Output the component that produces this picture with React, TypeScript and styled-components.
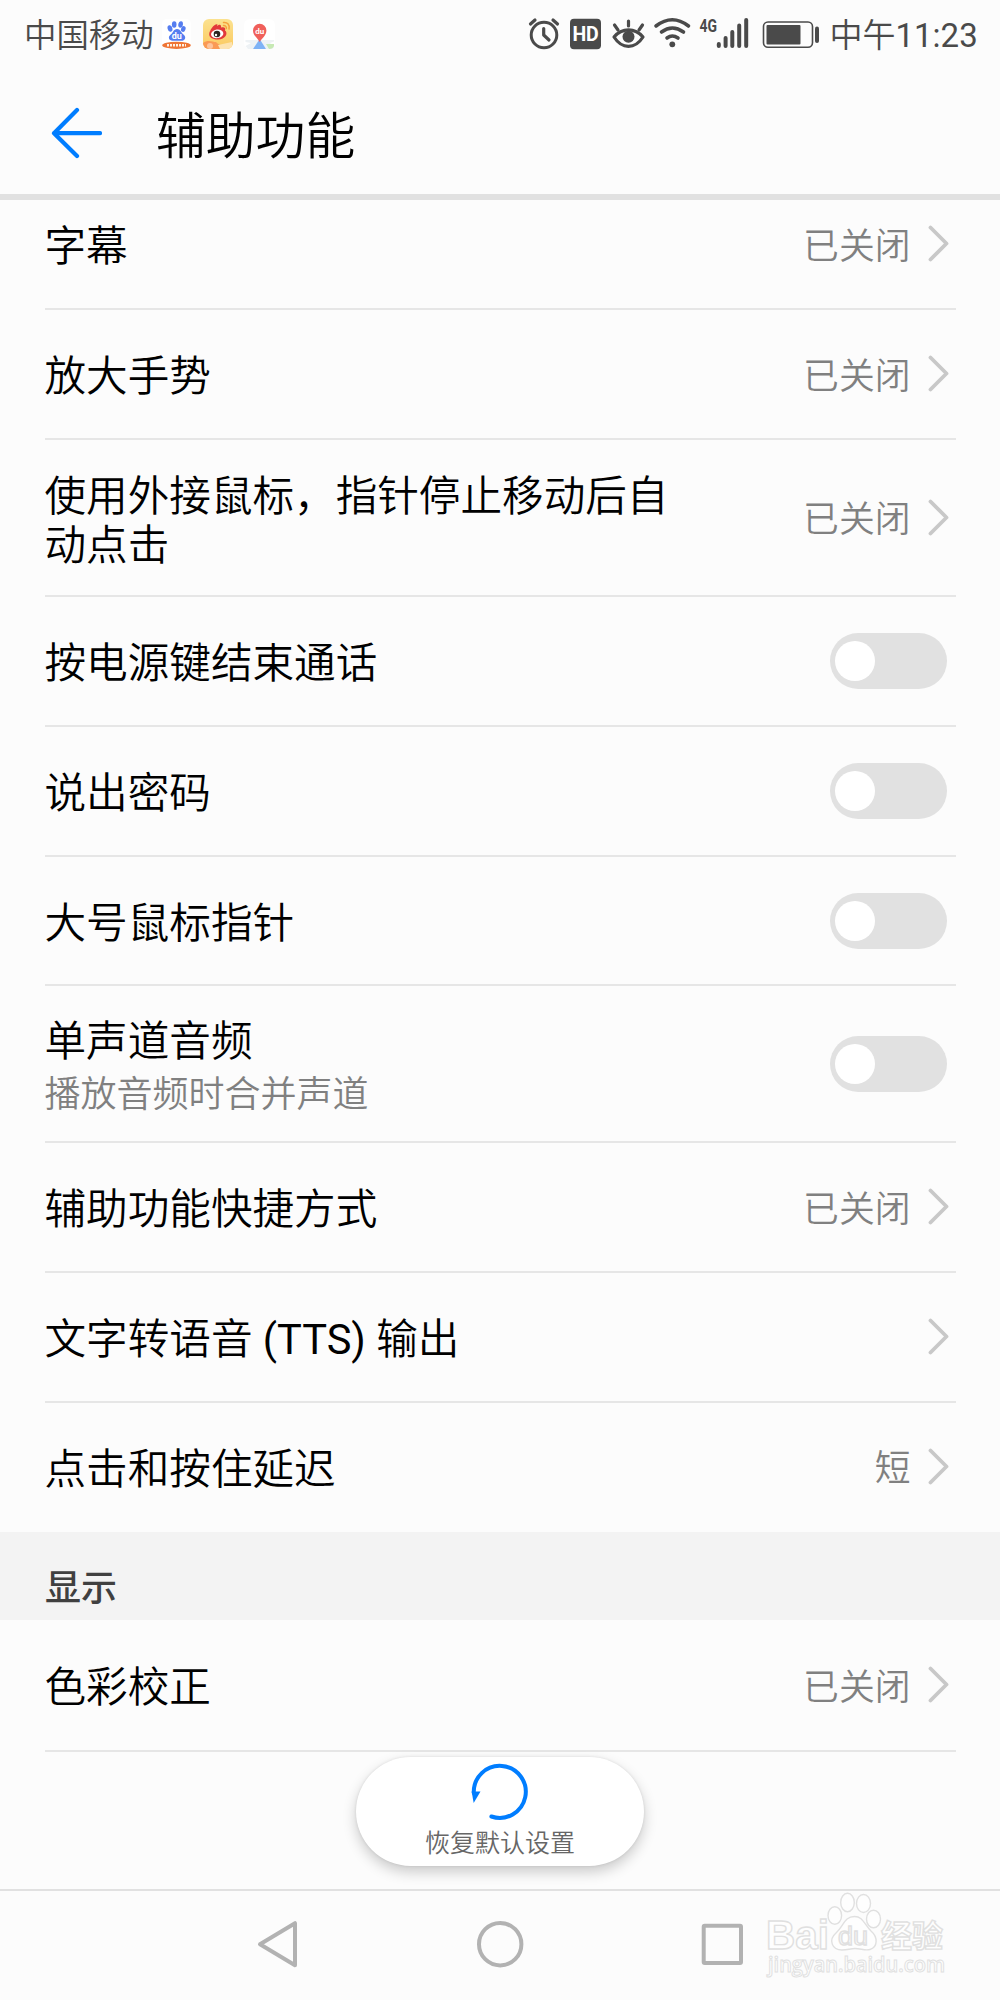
import React from "react";
import styled, { createGlobalStyle } from "styled-components";

const GlobalStyle = createGlobalStyle`
  body { margin: 0; background: #fcfcfc; }
  * { box-sizing: border-box; }
`;

const fontStack = `Roboto, "Noto Sans CJK SC DemiLight", "Noto Sans CJK SC", sans-serif`;

const Screen = styled.main`
  position: relative;
  display: flex;
  flex-direction: column;
  width: 1000px;
  height: 2000px;
  overflow: hidden;
  background: #fcfcfc;
  color: #000;
  font-family: ${fontStack};
`;

const StatusBar = styled.header`
  display: flex;
  justify-content: space-between;
  height: 70px;
  padding: 0 22px 0 24px;
  color: #4a4a4a;
  font-size: 32.4px;
  line-height: 72px;
`;

const StatusGroup = styled.div`
  display: flex;
  white-space: nowrap;
  svg { display: block; flex: none; }
`;

const Carrier = styled.span`
  width: 130px;
`;

const Clock = styled.span`
  width: 148.5px;
  margin-left: 5.5px;
  font-size: 33px;
`;

const TitleBar = styled.div`
  display: flex;
  align-items: center;
  height: 130px;
  padding-left: 50px;
  border-bottom: 6px solid #e1e1e1;
  svg { margin-top: 2px; }
`;

const Title = styled.h1`
  margin: 9px 0 0 54px;
  font-size: 49.800px;
  font-weight: 400;
  line-height: 60px;
`;

const List = styled.section`
  flex: 1;
  overflow: hidden;
`;

const Group = styled.div<{ $scrolled?: boolean }>`
  margin-top: ${(p) => (p.$scrolled ? "-20px" : "0")};
`;

const Row = styled.div<{ $height: number; $last?: boolean }>`
  display: flex;
  align-items: center;
  justify-content: space-between;
  height: ${(p) => p.$height}px;
  margin: 0 44.5px;
  border-bottom: 2px solid ${(p) => (p.$last ? "transparent" : "#e6e6e6")};
`;

const Texts = styled.div<{ $tall: boolean }>`
  width: 640px;
  padding-top: ${(p) => (p.$tall ? 7 : 5)}px;
`;

const Label = styled.div`
  font-size: 41.6px;
  line-height: 49px;
`;

const Summary = styled.div`
  margin-top: 6px;
  color: #808080;
  font-size: 36px;
  line-height: 46px;
`;

const Trailing = styled.div`
  display: flex;
  align-items: center;
  padding-right: 7px;
  svg { display: block; }
`;

const Value = styled.span`
  margin-right: 17px;
  padding-top: 5px;
  color: #808080;
  font-size: 35.800px;
  line-height: 44px;
`;

const Track = styled.div`
  width: 117px;
  height: 56px;
  margin-right: 1.5px;
  padding: 8px 5px;
  border-radius: 28px;
  background: #e1e1e1;
`;

const Knob = styled.div`
  width: 40px;
  height: 40px;
  border-radius: 50%;
  background: #fff;
`;

const SectionTitle = styled.h2`
  height: 88px;
  margin: 0;
  padding: 33px 45px 0;
  background: #f3f3f3;
  color: #404040;
  font-family: Roboto, "Noto Sans CJK SC", sans-serif;
  font-size: 36px;
  font-weight: 500;
  line-height: 48px;
`;

const RestoreButton = styled.button`
  position: absolute;
  left: 356px;
  top: 1757px;
  display: flex;
  flex-direction: column;
  align-items: center;
  width: 288px;
  height: 109px;
  padding: 6px 0 0;
  border: 0;
  border-radius: 55px;
  background: #fff;
  box-shadow: 0 6px 14px rgba(0, 0, 0, 0.2), 0 0 3px rgba(0, 0, 0, 0.1);
  color: #666;
  font: 400 25px/32px ${fontStack};
  svg { display: block; margin-bottom: 7px; }
`;

const NavBar = styled.nav`
  display: flex;
  justify-content: center;
  gap: 174px;
  height: 111px;
  padding-top: 29px;
  border-top: 2px solid #e1e1e1;
`;

const Watermark = styled.svg`
  position: absolute;
  left: 760px;
  top: 1885px;
`;

const BackArrow = () => (
  <svg width="52" height="52" viewBox="50 107 52 52" fill="none" stroke="#007dff" strokeWidth="4.2" strokeLinecap="round" strokeLinejoin="round">
    <path d="M77 110L54 133.200L77 156M54 133.200H100" />
  </svg>
);

const Chevron = () => (
  <svg width="21" height="38" viewBox="0 0 21 38" fill="none" stroke="#c8c8c8" strokeWidth="3.800" strokeLinecap="round" strokeLinejoin="round">
    <path d="M2.500 2.500L18.500 18.500L2.500 34.500" />
  </svg>
);

const AppIcons = () => (
  <svg width="124" height="70" viewBox="154 0 124 70">
    <rect x="162" y="19" width="29" height="30" rx="5" fill="#fff" />
    <g fill="#557df0">
      <ellipse cx="170" cy="28.500" rx="2.400" ry="3.300" transform="rotate(-15 170 28.500)" />
      <ellipse cx="174.200" cy="24.500" rx="2.300" ry="3.200" />
      <ellipse cx="180.600" cy="24.500" rx="2.300" ry="3.200" transform="rotate(10 180.600 24.500)" />
      <ellipse cx="183.300" cy="29" rx="2.200" ry="3" transform="rotate(20 183.300 29)" />
      <path d="M177 29C173.500 29 173 33 170.500 34.800C167.500 37 169 40.800 172.500 40.800H181C185.500 40.800 186.500 37 183.500 34.500C181 32.500 180.500 29 177 29Z" />
    </g>
    <text x="176.700" y="38.500" fontSize="9" fontWeight="700" textAnchor="middle" fill="#fff">du</text>
    <ellipse cx="176.500" cy="45.300" rx="14.300" ry="3.600" fill="#ef7535" />
    <path d="M167 45.300H186" stroke="#fff1e5" strokeWidth="2.500" strokeDasharray="2 1" />

    <defs>
      <linearGradient id="sunny" x2="0" y2="1">
        <stop offset="0" stopColor="#fbe290" />
        <stop offset="1" stopColor="#fbc95f" />
      </linearGradient>
      <clipPath id="tile"><rect x="203" y="19" width="30" height="30" rx="6" /></clipPath>
    </defs>
    <g clipPath="url(#tile)">
      <rect x="203" y="19" width="30" height="30" fill="url(#sunny)" />
      <path d="M203 43C208 39 213 42 216 42C219 46 224 44 226 49H203Z" fill="#fa9a55" />
      <circle cx="210" cy="46" r="3" fill="#fdc39a" />
      <path d="M218 45L232 42V49H220Z" fill="#fde3b0" />
    </g>
    <path d="M217 26C220 23.500 221.500 25 221 27.500C224 26.500 226 27.500 225 30.500C228.500 33 225.500 39.500 218 39.500C212 39.500 209 37 209.200 34C209.500 30 215 23 217.500 24.500Z" fill="#e2393b" />
    <ellipse cx="217.200" cy="33.800" rx="6.200" ry="4.300" fill="#fff" transform="rotate(-8 217.200 33.800)" />
    <circle cx="217" cy="34" r="3.300" fill="#2c2522" />
    <circle cx="216" cy="35" r="1.200" fill="#fff" />
    <path d="M223.500 22.500C227.500 22 230 25 229 29M223.500 25.500C225.500 25.300 226.700 27 226.300 28.500" fill="none" stroke="#f5a13d" strokeWidth="1.500" strokeLinecap="round" />

    <rect x="244" y="19" width="31" height="30" rx="6" fill="#fff" />
    <path d="M245.500 40H274V41.500L270 43L274 47L272 49H266L260 40L253 49H248L245.500 46L251 43L245.500 42Z" fill="#eef2f5" />
    <path d="M266 44L274 44V46Q273 49 269 49Z" fill="#c7e9b4" />
    <path d="M259.700 39L266 49H253Z" fill="#7eb2f5" />
    <path d="M259.700 42C257.500 38 253 35.500 253 30.500A6.700 6.700 0 0 1 266.400 30.500C266.400 35.500 262 38 259.700 42Z" fill="#f0605b" />
    <text x="259.700" y="34" fontSize="8" fontWeight="700" textAnchor="middle" fill="#fff">du</text>
  </svg>
);

const SystemIcons = () => (
  <svg width="300" height="70" viewBox="524 0 300 70" fill="none" stroke="#4a4a4a" strokeLinecap="round" strokeLinejoin="round">
    <circle cx="544" cy="35" r="12.800" strokeWidth="3" />
    <path d="M543.700 28.500V35L549 40" strokeWidth="3.200" />
    <path d="M530.500 24L535 20M557.500 24L553 20" strokeWidth="3.200" />
    <rect x="570" y="18.700" width="31" height="30.500" rx="4" fill="#4a4a4a" stroke="none" />
    <text x="585.600" y="40.700" fontSize="19.500" fontWeight="700" textAnchor="middle" textLength="26" fill="#fff" stroke="none">HD</text>
    <path d="M614 37C622 27.500 635 27.500 643 37C635 49.500 622 49.500 614 37Z" strokeWidth="3.200" />
    <circle cx="628.500" cy="36.800" r="6" fill="#4a4a4a" stroke="none" />
    <path d="M628.500 21V26M614.500 25L618 30M642.500 25L639 30" strokeWidth="3.200" />
    <path d="M656 26Q672.300 13.500 688.500 26M661.500 32Q672.300 24 683.500 32M667 38Q672.300 34 678 38" strokeWidth="3.600" />
    <circle cx="672.300" cy="44.300" r="2.900" fill="#4a4a4a" stroke="none" />
    <text x="699.500" y="31.500" fontSize="18.500" fontWeight="700" textLength="17.500" lengthAdjust="spacingAndGlyphs" fill="#4a4a4a" stroke="none">4G</text>
    <path d="M718.800 44V46M725.600 38V46M732.300 32V46M739.200 25.500V46M746.200 20V46" strokeWidth="4" />
    <rect x="763.500" y="22" width="49" height="25.300" rx="4.500" strokeWidth="1.600" />
    <rect x="766.500" y="25" width="34" height="19.500" rx="1" fill="#4a4a4a" stroke="none" />
    <path d="M817 28.500V41" strokeWidth="4" />
  </svg>
);

const RestoreIcon = () => (
  <svg width="58" height="58" viewBox="472 1763 58 58">
    <path d="M474.800 1793A26 26 0 1 1 492.400 1816.500" fill="none" stroke="#007dff" strokeWidth="4" strokeLinecap="round" />
    <path d="M472.600 1791.500H481.500L474.700 1803Z" fill="#007dff" />
  </svg>
);

const NavIcon = ({ children }: { children: React.ReactNode }) => (
  <svg width="48" height="48" viewBox="0 0 48 48" fill="none" stroke="#b2b2b2" strokeWidth="4" strokeLinejoin="round">
    {children}
  </svg>
);

const BaiduMark = () => (
  <Watermark width="235" height="115" viewBox="760 1885 235 115" fill="#fefefe" stroke="#e0e0e0" strokeWidth="1.400" fontFamily='"Open Sans", "Noto Sans CJK SC", sans-serif'>
    <ellipse cx="834.800" cy="1915.500" rx="6.800" ry="8.800" />
    <ellipse cx="847.500" cy="1902.500" rx="6.800" ry="9.200" />
    <ellipse cx="863.500" cy="1903.500" rx="7" ry="9" />
    <ellipse cx="873.500" cy="1919" rx="7" ry="8.800" />
    <path d="M854.500 1916.500C844 1916.500 844 1926 836 1933C828 1940 832 1950 842 1950C848 1950 850 1948.500 855 1948.500C861 1948.500 865 1951 870 1949.500C878 1947 878 1937 871 1931C864 1924 863 1916.500 854.500 1916.500Z" />
    <text x="766" y="1948.500" fontFamily='"Liberation Sans", sans-serif' fontSize="41" fontWeight="700" textLength="63" lengthAdjust="spacingAndGlyphs">Bai</text>
    <text x="838" y="1944.500" fontFamily='"Liberation Sans", sans-serif' fontSize="25" textLength="30" lengthAdjust="spacingAndGlyphs">du</text>
    <text x="881" y="1946.500" fontSize="31" fontWeight="700" textLength="62" lengthAdjust="spacingAndGlyphs">经验</text>
    <text x="768" y="1972" fontSize="21" fontWeight="600" strokeWidth="1" textLength="177" lengthAdjust="spacingAndGlyphs">jingyan.baidu.com</text>
  </Watermark>
);

type Item = { label: string; summary?: string; value?: string; toggle?: boolean; height?: number };

const general: Item[] = [
  { label: "字幕", value: "已关闭" },
  { label: "放大手势", value: "已关闭" },
  { label: "使用外接鼠标，指针停止移动后自动点击", value: "已关闭", height: 157 },
  { label: "按电源键结束通话", toggle: true },
  { label: "说出密码", toggle: true },
  { label: "大号鼠标指针", toggle: true, height: 129 },
  { label: "单声道音频", summary: "播放音频时合并声道", toggle: true, height: 157 },
  { label: "辅助功能快捷方式", value: "已关闭" },
  { label: "文字转语音 (TTS) 输出" },
  { label: "点击和按住延迟", value: "短", height: 129 },
];

const SettingRow = ({ item, last }: { item: Item; last?: boolean }) => (
  <Row $height={item.height ?? 130} $last={last}>
    <Texts $tall={item.height === 157}>
      <Label>{item.label}</Label>
      {item.summary && <Summary>{item.summary}</Summary>}
    </Texts>
    <Trailing>
      {item.toggle ? (
        <Track><Knob /></Track>
      ) : (
        <>
          {item.value && <Value>{item.value}</Value>}
          <Chevron />
        </>
      )}
    </Trailing>
  </Row>
);

export default function App() {
  return (
    <Screen>
      <GlobalStyle />
      <StatusBar>
        <StatusGroup>
          <Carrier>中国移动</Carrier>
          <AppIcons />
        </StatusGroup>
        <StatusGroup>
          <SystemIcons />
          <Clock>中午11:23</Clock>
        </StatusGroup>
      </StatusBar>
      <TitleBar>
        <BackArrow />
        <Title>辅助功能</Title>
      </TitleBar>
      <List>
        <Group $scrolled>
          {general.map((item, i) => (
            <SettingRow key={item.label} item={item} last={i === general.length - 1} />
          ))}
        </Group>
        <SectionTitle>显示</SectionTitle>
        <Group>
          <SettingRow item={{ label: "色彩校正", value: "已关闭", height: 132 }} />
        </Group>
      </List>
      <RestoreButton>
        <RestoreIcon />
        恢复默认设置
      </RestoreButton>
      <NavBar>
        <NavIcon><path d="M6 24.300L41 3.200V45.300Z" /></NavIcon>
        <NavIcon><circle cx="24.200" cy="24.200" r="21.200" /></NavIcon>
        <NavIcon><rect x="5.700" y="5.700" width="37.300" height="37.300" rx="1" /></NavIcon>
      </NavBar>
      <BaiduMark />
    </Screen>
  );
}
